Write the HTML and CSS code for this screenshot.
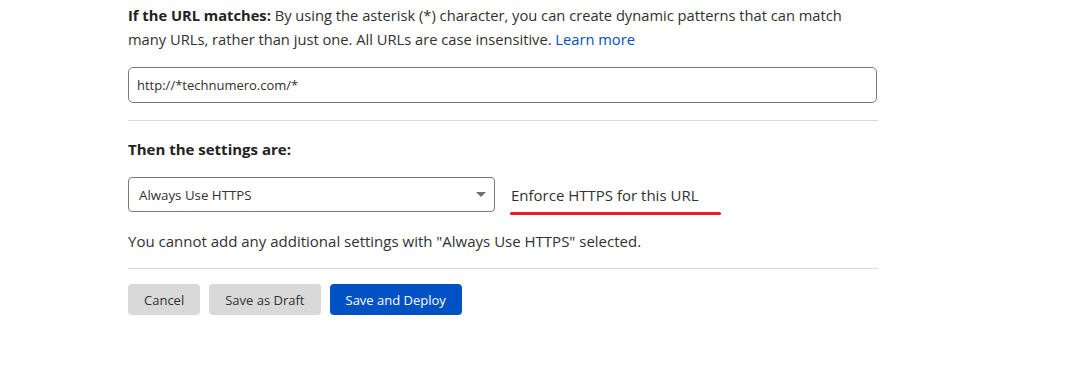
FILE: index.html
```html
<!DOCTYPE html>
<html lang="en">
<head>
    <meta charset="UTF-8">
    <meta name="viewport" content="width=device-width, initial-scale=1.0">
    <title>Page Rule</title>
    <link rel="stylesheet" href="styles.css">
</head>
<body>
    <div class="form">
        <p class="intro">
            <b>If the URL matches:</b> By using the asterisk (*) character, you can create dynamic patterns that can match
            many URLs, rather than just one. All URLs are case insensitive. <a href="#">Learn more</a>
        </p>
        <input type="text" class="url-input" value="http://*technumero.com/*">
        <hr>

        <h3 class="label">Then the settings are:</h3>
        <div class="setting-row">
            <div class="select">
                <span>Always Use HTTPS</span>
                <span class="arrow"></span>
            </div>
            <span class="setting-desc">Enforce HTTPS for this URL</span>
        </div>
        <p class="note">You cannot add any additional settings with "Always Use HTTPS" selected.</p>
        <hr class="bottom">

        <div class="actions">
            <button class="btn">Cancel</button>
            <button class="btn">Save as Draft</button>
            <button class="btn primary">Save and Deploy</button>
        </div>
    </div>
</body>
</html>
```

FILE: styles.css
```css
body {
    margin: 0;
    background: white;
    font-family: "Open Sans", Arial, sans-serif;
    color: #313131;
}
.form {
    width: 750px;
    margin-left: 128px;
}
.intro {
    margin: 3px 0 0;
    font-size: 14.7px;
    line-height: 24px;
}
.intro b {
    font-weight: 700;
    color: #222;
}
.intro a {
    color: #0051c3;
    text-decoration: none;
}
.url-input {
    display: block;
    box-sizing: border-box;
    width: 749px;
    height: 36px;
    margin-top: 16px;
    padding: 0 8px;
    border: 1px solid #7b7b7b;
    border-radius: 5px;
    font-family: inherit;
    font-size: 13px;
    color: #313131;
}
hr {
    border: none;
    border-top: 1px solid #d9d9d9;
    margin: 17px 0 0;
}
hr.bottom {
    margin-top: 17px;
}
.label {
    margin: 18px 0 0;
    font-size: 15px;
    font-weight: 700;
    line-height: 20px;
    color: #222;
}
.setting-row {
    display: flex;
    align-items: center;
    margin-top: 18px;
}
.select {
    box-sizing: border-box;
    width: 367px;
    height: 35px;
    display: flex;
    align-items: center;
    justify-content: space-between;
    padding: 0 8px 0 10px;
    border: 1px solid #7b7b7b;
    border-radius: 4px;
    font-size: 13.3px;
}
.arrow {
    width: 0;
    height: 0;
    border-left: 5px solid transparent;
    border-right: 5px solid transparent;
    border-top: 5px solid #6f6f6f;
}
.setting-desc {
    position: relative;
    margin-left: 16px;
    font-size: 15px;
    color: #313131;
}
.setting-desc::after {
    content: "";
    position: absolute;
    left: -1px;
    top: 27px;
    width: 211px;
    height: 3px;
    border-radius: 2px;
    background: #ed1c24;
}
.note {
    margin: 19px 0 0;
    font-size: 15px;
    line-height: 20px;
}
.actions {
    display: flex;
    gap: 9px;
    margin-top: 15px;
}
.btn {
    height: 31px;
    padding: 0 16px;
    border: none;
    border-radius: 4px;
    background: #d9d9d9;
    color: #313131;
    font-family: inherit;
    font-size: 13px;
}
.btn.primary {
    background: #0051c3;
    color: white;
}
```
